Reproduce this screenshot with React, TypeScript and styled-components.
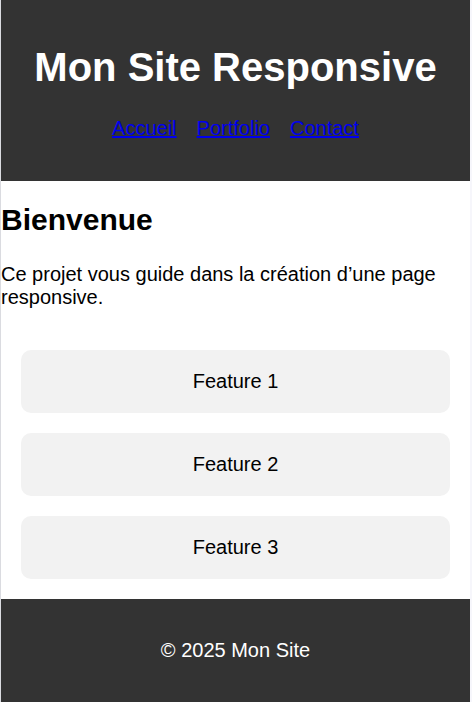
import styled, { createGlobalStyle } from 'styled-components'

const GlobalStyle = createGlobalStyle`
    html, body {
        margin: 0;
        padding: 0;
        background: #ffffff;
        font-family: "Liberation Sans", Arial, sans-serif;
    }
    #root {
        border-left: 1px solid #dadbe0;
        border-right: 2px solid #f6f6fb;
    }
`

const Header = styled.header`
    background: #333333;
    color: #ffffff;
    text-align: center;
    padding: 20px 0 41px;
`

const Title = styled.h1`
    margin: 25px 0 0;
    font-size: 40px;
    font-weight: bold;
`

const NavList = styled.ul`
    list-style: none;
    margin: 27px 0 0;
    padding: 0;
    display: flex;
    justify-content: center;
    gap: 20px;
    font-size: 20px;
`

const NavLink = styled.a`
    color: #0000ee;
    text-decoration: underline;
`

const Main = styled.main`
    padding-top: 22px;
`

const Heading = styled.h2`
    margin: 0 0 26px;
    font-size: 30px;
    font-weight: bold;
`

const Intro = styled.p`
    margin: 0 0 21px;
    font-size: 20px;
`

const Features = styled.section`
    display: flex;
    flex-direction: column;
    gap: 20px;
    padding: 20px;
`

const Card = styled.div`
    background: #f2f2f2;
    border-radius: 10px;
    padding: 20px;
    text-align: center;
    font-size: 20px;
`

const Footer = styled.footer`
    background: #333333;
    color: #ffffff;
    text-align: center;
    padding: 40px 0;
    font-size: 20px;
`

const links = ['Accueil', 'Portfolio', 'Contact']
const features = ['Feature 1', 'Feature 2', 'Feature 3']

export default function App() {
    return (
        <>
            <GlobalStyle />
            <Header>
                <Title>Mon Site Responsive</Title>
                <nav>
                    <NavList>
                        {links.map((l) => (
                            <li key={l}>
                                <NavLink href="#">{l}</NavLink>
                            </li>
                        ))}
                    </NavList>
                </nav>
            </Header>
            <Main>
                <Heading>Bienvenue</Heading>
                <Intro>Ce projet vous guide dans la création d’une page responsive.</Intro>
                <Features>
                    {features.map((f) => (
                        <Card key={f}>{f}</Card>
                    ))}
                </Features>
            </Main>
            <Footer>© 2025 Mon Site</Footer>
        </>
    )
}
